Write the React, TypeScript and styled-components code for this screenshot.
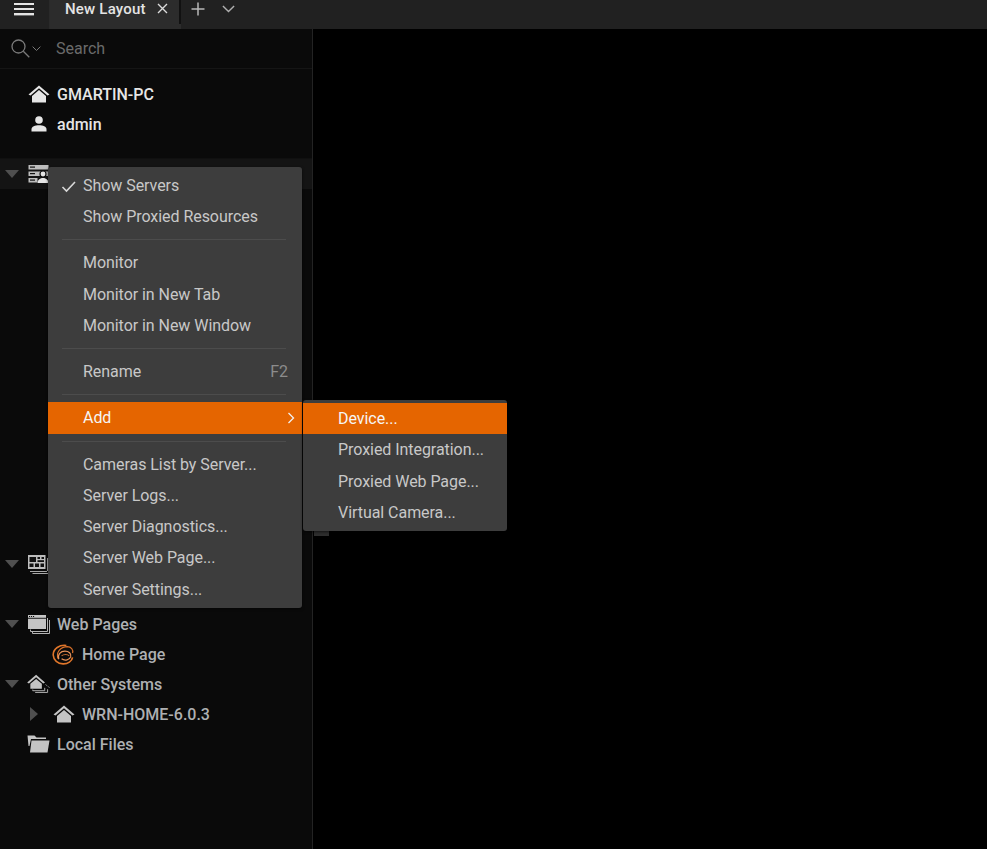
import styled, {createGlobalStyle} from "styled-components";
import type {ReactNode} from "react";

const GlobalStyle = createGlobalStyle`
    html, body {
        margin: 0;
        height: 100%;
        background: #000;
        overflow: hidden;
    }

    #root {
        height: 100%;
    }
`;

const Page = styled.div`
    position: relative;
    width: 987px;
    height: 849px;
    display: flex;
    flex-direction: column;
    font-family: Roboto, "Liberation Sans", sans-serif;
    font-size: 16px;
    overflow: hidden;
`;

const TitleBar = styled.div`
    flex: 0 0 29px;
    display: flex;
    background: #212121;
    box-sizing: border-box;
`;

const MenuButton = styled.div`
    flex: 0 0 50px;
    display: flex;
    align-items: flex-start;
    justify-content: center;
    padding: 2px 2px 0 0;
    box-sizing: border-box;
    border-right: 1px solid #2a2a2a;
`;

const Tab = styled.div`
    position: relative;
    flex: 0 0 131px;
    height: 29px;
    box-sizing: border-box;
    display: flex;
    align-items: flex-start;
    padding: 0 13px 0 15px;
    background: #2c2c2c;
    color: #e4e4e4;
    font-size: 15px;
    font-weight: 500;
    letter-spacing: 0.2px;
    line-height: 18px;
    justify-content: space-between;

    &::after {
        content: "";
        position: absolute;
        right: 0;
        top: 0;
        width: 2px;
        height: 24px;
        background: #111;
    }
`;

const TabClose = styled.span`
    display: flex;
    padding-top: 3px;
`;

const TabAction = styled.div<{ $w: number; }>`
    flex: 0 0 ${props => props.$w}px;
    height: 18px;
    display: flex;
    align-items: center;
    justify-content: center;
`;

const Body = styled.div`
    flex: 1;
    display: flex;
    min-height: 0;
`;

const Sidebar = styled.div`
    flex: 0 0 313px;
    box-sizing: border-box;
    background: #0a0a0a;
    border-right: 1px solid #232323;
`;

const SearchRow = styled.div`
    height: 40px;
    box-sizing: border-box;
    display: flex;
    align-items: center;
    padding-left: 11px;
    border-bottom: 1px solid #151515;
`;

const SearchIcons = styled.div`
    flex: 0 0 45px;
    display: flex;
    align-items: center;
    gap: 2px;
`;

const SearchText = styled.span`
    color: #6a6a6a;
`;

const Header = styled.div`
    padding: 10px 0 19px 27px;
    display: flex;
    flex-direction: column;
    border-bottom: 1px solid #101010;
`;

const HeaderRow = styled.div`
    height: 30px;
    display: flex;
    align-items: center;
    gap: 7px;
    color: #e6e6e6;
    font-weight: 500;
`;

const IconBox = styled.span`
    flex: 0 0 23px;
    min-width: 0;
    display: flex;
    align-items: center;
    justify-content: center;
`;

const Tree = styled.div`
    display: flex;
    flex-direction: column;
`;

const Row = styled.div<{ $depth?: number; $active?: boolean; }>`
    height: 30px;
    display: flex;
    align-items: center;
    padding-left: ${props => (props.$depth ?? 0) * 25 + 4}px;
    background: ${props => props.$active ? "#141414" : "transparent"};
    color: #aeb0b2;
    font-weight: 500;
`;

const Arrow = styled.span`
    flex: 0 0 23px;
    box-sizing: border-box;
    padding-left: 1px;
    display: flex;
    align-items: center;
    justify-content: flex-start;
`;

const RowLabel = styled.span`
    margin-left: 7px;
`;

const TreeGap = styled.div`
    height: 360px;
`;

const Menu = styled.div<{ $x: number; $y: number; $w: number; $pad: number; }>`
    position: absolute;
    left: ${props => props.$x}px;
    top: ${props => props.$y}px;
    width: ${props => props.$w}px;
    box-sizing: border-box;
    padding: ${props => props.$pad}px 0;
    background: #3d3d3d;
    border-radius: 3px;
    box-shadow: 0 1px 3px rgba(0, 0, 0, 0.6);
    color: #c8c8c8;
    letter-spacing: -0.05px;
`;

const Item = styled.div<{ $active?: boolean; }>`
    height: 31.27px;
    display: flex;
    align-items: center;
    position: relative;
    padding: 0 14px 0 35px;
    background: ${props => props.$active ? "#e56500" : "transparent"};
    color: ${props => props.$active ? "#f5f5f5" : "#c8c8c8"};
    justify-content: space-between;
`;

const ItemCheck = styled.span`
    position: absolute;
    left: 13px;
    top: 10px;
    display: flex;
`;

const SubmenuArrow = styled.span`
    display: flex;
    margin-right: -7px;
`;

const Shortcut = styled.span`
    color: #8c8c8c;
`;

const Separator = styled.div`
    height: 1px;
    margin: 7px 16px 7px 14px;
    background: #4c4c4c;
`;

const ScrollStub = styled.div`
    position: absolute;
    left: 314px;
    top: 530px;
    width: 15px;
    height: 6px;
    background: #2e2e2e;
`;

const HomeIcon = ({color}: { color: string; }) => <svg width="22" height="18" viewBox="0 0 22 18">
  <path d="M0.5 9.5 L11 0.5 L21.5 9.5 L19.5 10.5 L11 3.2 L2.5 10.5 Z" fill={color}/>
  <path d="M4 11 L11 5 L18 11 V17.5 H4 Z" fill={color}/>
</svg>;

const UserIcon = () => <svg width="16" height="16" viewBox="0 0 16 16">
  <circle cx="8" cy="4" r="3.8" fill="#e6e6e6"/>
  <path d="M0.5 15.5 V13 C0.5 10.5 4 9.2 8 9.2 C12 9.2 15.5 10.5 15.5 13 V15.5 Z" fill="#e6e6e6"/>
</svg>;

const ServerIcon = () => <svg width="21" height="20" viewBox="0 0 21 20">
  <rect x="0.5" y="1" width="20" height="4.5" fill="#bdbdbd"/>
  <rect x="0.5" y="7.5" width="20" height="4.5" fill="#bdbdbd"/>
  <rect x="0.5" y="14" width="9" height="4.5" fill="#bdbdbd"/>
  <rect x="2" y="2.5" width="5" height="1.2" fill="#111"/>
  <rect x="2" y="9" width="5" height="1.2" fill="#111"/>
  <rect x="2" y="15.5" width="5" height="1.2" fill="#111"/>
  <circle cx="15" cy="10" r="3.6" fill="#111"/>
  <circle cx="15" cy="10" r="2.4" fill="#e6e6e6"/>
  <path d="M9.5 19 C9.5 15.5 12.5 14 15 14 C17.5 14 20.5 15.5 20.5 19 Z" fill="#e6e6e6"/>
</svg>;

const LayoutsIcon = () => <svg width="23" height="21" viewBox="0 0 23 21">
  <path d="M3 17.5 H20 M5.5 19.5 H22.5 M20.5 4 V17 M22.5 6 V19" stroke="#a8a8a8" strokeWidth="1" fill="none"/>
  <rect x="1" y="1" width="17.5" height="14" fill="#bdbdbd"/>
  <rect x="2.5" y="3" width="6.5" height="5" fill="#111"/>
  <rect x="10.5" y="3" width="2.5" height="2" fill="#111"/>
  <rect x="14.5" y="3" width="2.5" height="2" fill="#111"/>
  <rect x="10.5" y="6.2" width="6.5" height="1.8" fill="#111"/>
  <rect x="2.5" y="9.5" width="4" height="3.5" fill="#111"/>
  <rect x="8" y="9.5" width="4" height="3.5" fill="#111"/>
  <rect x="13.5" y="9.5" width="3.5" height="3.5" fill="#111"/>
</svg>;

const WebPagesIcon = () => <svg width="22" height="21" viewBox="0 0 22 21">
  <path d="M2.5 15.5 V17.5 H19.5 V4 M4.5 17.5 V19.5 H21.5 V6" stroke="#b4b4b4" strokeWidth="1" fill="none"/>
  <rect x="0" y="1" width="18" height="14" fill="#c4c4c4"/>
  <rect x="0" y="3.8" width="18" height="0.9" fill="#0a0a0a"/>
  <rect x="1" y="2" width="1.1" height="1" fill="#0a0a0a"/>
  <rect x="3" y="2" width="1.1" height="1" fill="#0a0a0a"/>
  <rect x="5" y="2" width="1.1" height="1" fill="#0a0a0a"/>
</svg>;

const WebPageLogo = () => <svg width="23" height="21" viewBox="0 0 24 22" fill="none">
  <path d="M15 1.5 C8 0.5 1 5 1.2 11.5 C1.5 17 6 20.5 11.5 20.8 C16.5 21 21 18 21.5 14" stroke="#e0762a" strokeWidth="1.7"/>
  <path d="M6.5 15.5 C3.5 9 9 3 16 2.8 C20 2.8 22.5 6 21.5 9.5" stroke="#d8702a" strokeWidth="1.2"/>
  <path d="M7 16 C5.5 11 9 7.5 13.5 7.5 C17.5 7.5 20.5 10 19.5 13.5 C18.5 16.5 13.5 18 10 15.5" stroke="#e8935a" strokeWidth="1.3"/>
  <path d="M10 12.5 C12 10.5 16.5 10.5 18 12.5" stroke="#c06a30" strokeWidth="1.1"/>
</svg>;

const SystemsIcon = () => <svg width="24" height="20" viewBox="0 0 24 20">
  <path d="M6 15.8 V17 H18.5 V14 M8.5 18.8 H21.5 V15.5" stroke="#b4b4b4" strokeWidth="1" fill="none"/>
  <path d="M19.5 10.5 L20.8 11.8 M22 12.5 L23.3 13.8" stroke="#b4b4b4" strokeWidth="1"/>
  <path d="M0.2 8.5 L9.5 0.3 L18.8 8.5 L17 9.4 L9.5 3 L2 9.4 Z" fill="#c4c4c4"/>
  <path d="M3.5 9.8 L9.5 4.7 L15.5 9.8 V15 H3.5 Z" fill="#c4c4c4"/>
</svg>;

const FolderIcon = () => <svg width="23" height="18" viewBox="0 0 23 18">
  <path d="M0.5 0.5 H7.5 L9.5 2.5 H19 V4 H4 L2.5 11 H1.5 Z" fill="#c4c4c4"/>
  <path d="M4.5 5.5 H22.5 L20.5 17.5 H3 Z" fill="#c4c4c4"/>
</svg>;

const DownArrow = () => <svg width="14" height="8" viewBox="0 0 14 8"><path d="M0 0 H14 L7 8 Z" fill="#4f4f4f"/></svg>;

const RightArrow = () => <svg width="8" height="14" viewBox="0 0 8 14"><path d="M0 0 V14 L8 7 Z" fill="#4f4f4f"/></svg>;

const Chevron = ({size, color}: { size: number; color: string; }) => <svg width={size} height={size * 0.6} viewBox="0 0 10 6" fill="none">
  <path d="M0.7 0.7 L5 5 L9.3 0.7" stroke={color} strokeWidth="1.1"/>
</svg>;

function MenuItem({children, active, checked, shortcut, submenu}: {
  children: ReactNode;
  active?: boolean;
  checked?: boolean;
  shortcut?: string;
  submenu?: boolean;
}) {
  return <Item $active={active}>
    {checked && <ItemCheck>
      <svg width="16" height="13" viewBox="0 0 16 13" fill="none">
        <path d="M1.5 7 L5.5 11 L14 2" stroke="#d8d8d8" strokeWidth="1.6"/>
      </svg>
    </ItemCheck>}
    <span>{children}</span>
    {shortcut && <Shortcut>{shortcut}</Shortcut>}
    {submenu && <SubmenuArrow><svg width="8" height="12" viewBox="0 0 8 12" fill="none">
      <path d="M1.5 1 L6.5 6 L1.5 11" stroke="#f0f0f0" strokeWidth="1.3"/>
    </svg></SubmenuArrow>}
  </Item>;
}

export default function App() {
  return <Page>
    <GlobalStyle/>
    <TitleBar>
      <MenuButton>
        <svg width="20" height="14" viewBox="0 0 20 14" fill="#e4e4e4">
          <rect x="0" y="1" width="20" height="2"/>
          <rect x="0" y="6" width="20" height="2"/>
          <rect x="0" y="11" width="20" height="2.4"/>
        </svg>
      </MenuButton>
      <Tab>
        New Layout
        <TabClose>
          <svg width="11" height="11" viewBox="0 0 11 11" stroke="#dcdcdc" strokeWidth="1.4">
            <path d="M1 1 L10 10 M10 1 L1 10"/>
          </svg>
        </TabClose>
      </Tab>
      <TabAction $w={33}>
        <svg width="14" height="14" viewBox="0 0 14 14" stroke="#b8b8b8" strokeWidth="1.5">
          <path d="M7 0.5 V13.5 M0.5 7 H13.5"/>
        </svg>
      </TabAction>
      <TabAction $w={28}>
        <Chevron size={13} color="#b0b0b0"/>
      </TabAction>
    </TitleBar>
    <Body>
      <Sidebar>
        <SearchRow>
          <SearchIcons>
            <svg width="19" height="19" viewBox="0 0 19 19" fill="none" stroke="#7a7a7a" strokeWidth="1.3">
              <circle cx="7.5" cy="7.5" r="6.5"/>
              <path d="M12.3 12.3 L18.3 18.3"/>
            </svg>
            <Chevron size={9} color="#7a7a7a"/>
          </SearchIcons>
          <SearchText>Search</SearchText>
        </SearchRow>
        <Header>
          <HeaderRow><IconBox><HomeIcon color="#e6e6e6"/></IconBox>GMARTIN-PC</HeaderRow>
          <HeaderRow><IconBox><UserIcon/></IconBox>admin</HeaderRow>
        </Header>
        <Tree>
          <Row $active>
            <Arrow><DownArrow/></Arrow>
            <IconBox><ServerIcon/></IconBox>
          </Row>
          <TreeGap/>
          <Row>
            <Arrow><DownArrow/></Arrow>
            <IconBox><LayoutsIcon/></IconBox>
          </Row>
          <Row/>
          <Row>
            <Arrow><DownArrow/></Arrow>
            <IconBox><WebPagesIcon/></IconBox>
            <RowLabel>Web Pages</RowLabel>
          </Row>
          <Row $depth={1}>
            <Arrow/>
            <IconBox><WebPageLogo/></IconBox>
            <RowLabel>Home Page</RowLabel>
          </Row>
          <Row>
            <Arrow><DownArrow/></Arrow>
            <IconBox><SystemsIcon/></IconBox>
            <RowLabel>Other Systems</RowLabel>
          </Row>
          <Row $depth={1}>
            <Arrow><RightArrow/></Arrow>
            <IconBox><HomeIcon color="#c4c4c4"/></IconBox>
            <RowLabel>WRN-HOME-6.0.3</RowLabel>
          </Row>
          <Row>
            <Arrow/>
            <IconBox><FolderIcon/></IconBox>
            <RowLabel>Local Files</RowLabel>
          </Row>
        </Tree>
      </Sidebar>
    </Body>
    <ScrollStub/>
    <Menu $x={48} $y={167} $w={254} $pad={2.7}>
      <MenuItem checked>Show Servers</MenuItem>
      <MenuItem>Show Proxied Resources</MenuItem>
      <Separator/>
      <MenuItem>Monitor</MenuItem>
      <MenuItem>Monitor in New Tab</MenuItem>
      <MenuItem>Monitor in New Window</MenuItem>
      <Separator/>
      <MenuItem shortcut="F2">Rename</MenuItem>
      <Separator/>
      <MenuItem active submenu>Add</MenuItem>
      <Separator/>
      <MenuItem>Cameras List by Server...</MenuItem>
      <MenuItem>Server Logs...</MenuItem>
      <MenuItem>Server Diagnostics...</MenuItem>
      <MenuItem>Server Web Page...</MenuItem>
      <MenuItem>Server Settings...</MenuItem>
    </Menu>
    <Menu $x={303} $y={400} $w={204} $pad={3}>
      <MenuItem active>Device...</MenuItem>
      <MenuItem>Proxied Integration...</MenuItem>
      <MenuItem>Proxied Web Page...</MenuItem>
      <MenuItem>Virtual Camera...</MenuItem>
    </Menu>
  </Page>;
}
